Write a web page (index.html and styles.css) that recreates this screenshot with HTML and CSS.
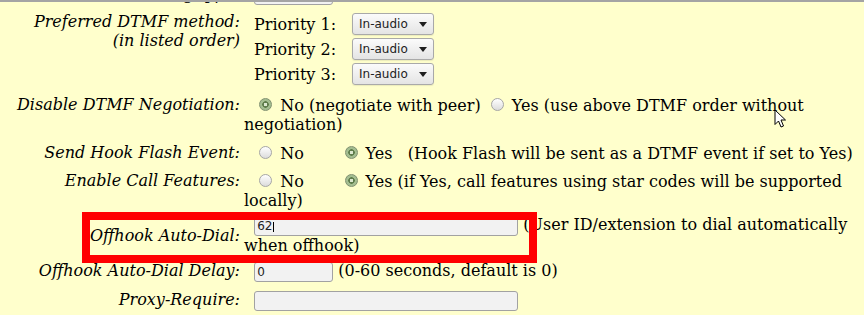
FILE: index.html
```html
<!DOCTYPE html>
<html lang="en">
<head>
  <meta charset="UTF-8" />
  <title>FXS Port Settings</title>
  <link rel="stylesheet" href="styles.css">
</head>
<body>
  <div class="screen">
    <div class="form">
      <div class="row">
        <div class="label">Hook Flash Timing type:</div>
        <div class="value">&nbsp; <input class="field short" type="text" value=""></div>
      </div>

      <div class="row">
        <div class="label">Preferred DTMF method:<br>(in listed order)</div>
        <div class="value">
          <div class="priorities">
            <span>Priority 1:</span>
            <span class="dropdown"><select><option>In-audio</option></select></span>
            <span>Priority 2:</span>
            <span class="dropdown"><select><option>In-audio</option></select></span>
            <span>Priority 3:</span>
            <span class="dropdown"><select><option>In-audio</option></select></span>
          </div>
        </div>
      </div>

      <div class="row gap-10">
        <div class="label">Disable DTMF Negotiation:</div>
        <div class="value">&nbsp; <input type="radio" name="dtmfneg" checked> No (negotiate with peer) <input type="radio" name="dtmfneg"> Yes (use above DTMF order without negotiation)</div>
      </div>

      <div class="row gap-9">
        <div class="label">Send Hook Flash Event:</div>
        <div class="value">&nbsp; <input type="radio" name="flash"> No&nbsp;&nbsp;&nbsp;&nbsp;&nbsp;&nbsp; <input type="radio" name="flash" checked> Yes&nbsp;&nbsp; (Hook Flash will be sent as a DTMF event if set to Yes)</div>
      </div>

      <div class="row gap-8">
        <div class="label">Enable Call Features:</div>
        <div class="value">&nbsp; <input type="radio" name="features"> No&nbsp;&nbsp;&nbsp;&nbsp;&nbsp;&nbsp; <input type="radio" name="features" checked> Yes (if Yes, call features using star codes will be supported locally)</div>
      </div>

      <div class="row gap-5">
        <div class="label label-middle">Offhook Auto-Dial:</div>
        <div class="value">&nbsp; <input class="field long" type="text" value="62"> (User ID/extension to dial automatically when offhook)</div>
      </div>

      <div class="row gap-6">
        <div class="label">Offhook Auto-Dial Delay:</div>
        <div class="value">&nbsp; <input class="field short" type="text" value="0"> (0-60 seconds, default is 0)</div>
      </div>

      <div class="row gap-8">
        <div class="label">Proxy-Require:</div>
        <div class="value">&nbsp; <input class="field long" type="text" value=""></div>
      </div>
    </div>

    <!-- annotation drawn over the screenshot -->
    <div class="callout"></div>
    <span class="caret"></span>
    <svg class="pointer" width="13" height="20" viewBox="0 0 13 20">
      <path d="M1 1 L1 15.5 L4.5 12 L7 18 L9.5 17 L7 11 L11.5 11 Z" fill="#fff" stroke="#000" stroke-width="1" stroke-linejoin="round"/>
    </svg>
  </div>
</body>
</html>
```

FILE: styles.css
```css
body {
  margin: 0;
  background: #ffffcc;
  font-family: "DejaVu Serif", serif;
  font-size: 16px;
  color: #000;
}
.screen {
  position: relative;
  height: 315px;
  box-sizing: border-box;
  border-top: 2px solid #a4a4a4;
  overflow: hidden;
}
.form {
  margin: -18px 0 0 4px;
}
.row {
  display: grid;
  grid-template-columns: 236px 616px;
  column-gap: 4px;
  margin-top: 7px;
}
.row:first-child { margin-top: 0; }
.row.gap-5 { margin-top: 5px; }
.row.gap-6 { margin-top: 6px; }
.row.gap-8 { margin-top: 8px; }
.row.gap-9 { margin-top: 9px; }
.row.gap-10 { margin-top: 10px; }
.label {
  text-align: right;
  font-style: italic;
}
.label-middle {
  align-self: center;
}
.priorities {
  display: grid;
  grid-template-columns: 98px auto;
  row-gap: 3px;
  align-items: center;
  justify-items: start;
  padding: 1px 0 0 10px;
}
.dropdown {
  position: relative;
  display: inline-block;
}
.dropdown::after {
  content: '';
  position: absolute;
  right: 7px;
  top: 9px;
  border-left: 4px solid transparent;
  border-right: 4px solid transparent;
  border-top: 5px solid #1e1e1e;
  pointer-events: none;
}
.dropdown select {
  appearance: none;
  -webkit-appearance: none;
  display: block;
  width: 82px;
  height: 22px;
  margin: 0;
  padding: 0 0 0 6px;
  font-family: "DejaVu Sans", sans-serif;
  font-size: 12px;
  color: #222;
  border: 1px solid #a9a9a9;
  border-radius: 3px;
  background: linear-gradient(#fbfbfb, #e4e4e4);
  box-shadow: 0 1px 1px rgba(0,0,0,0.08);
}
.field {
  box-sizing: border-box;
  height: 20px;
  margin: 0;
  padding: 0 2px;
  font-family: "DejaVu Sans", sans-serif;
  font-size: 12px;
  color: #222;
  background: #f2f2f2;
  border: 1px solid #a2a2a2;
  border-radius: 3px;
}
.field.short { width: 79px; }
.field.long { width: 264px; }
input[type=radio] {
  appearance: none;
  -webkit-appearance: none;
  box-sizing: border-box;
  width: 13px;
  height: 13px;
  margin: 3px 3px 0 5px;
  border: 1px solid #a6a6a6;
  border-radius: 50%;
  background: linear-gradient(#ffffff, #dcdcdc);
}
input[type=radio]:checked {
  border-color: #7f9070;
  background: radial-gradient(circle, #dce8d0 0 1.5px, #5f7d4c 2px 3px, #a4be90 3.5px);
}
.callout {
  position: absolute;
  left: 82px;
  top: 210px;
  width: 455px;
  height: 51px;
  box-sizing: border-box;
  border: 8px solid #ff0000;
}
.caret {
  position: absolute;
  left: 273px;
  top: 220px;
  width: 1px;
  height: 10px;
  background: #000;
}
.pointer {
  position: absolute;
  left: 774px;
  top: 107px;
}
```
